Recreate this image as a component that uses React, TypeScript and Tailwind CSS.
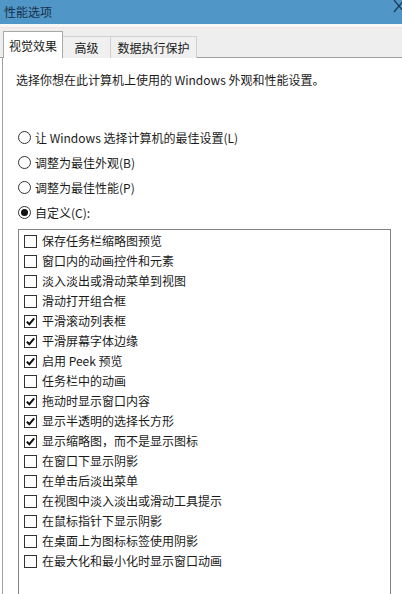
import React from "react";

const items: [string, boolean][] = [
  ["保存任务栏缩略图预览", false],
  ["窗口内的动画控件和元素", false],
  ["淡入淡出或滑动菜单到视图", false],
  ["滑动打开组合框", false],
  ["平滑滚动列表框", true],
  ["平滑屏幕字体边缘", true],
  ["启用 Peek 预览", true],
  ["任务栏中的动画", false],
  ["拖动时显示窗口内容", true],
  ["显示半透明的选择长方形", true],
  ["显示缩略图，而不是显示图标", true],
  ["在窗口下显示阴影", false],
  ["在单击后淡出菜单", false],
  ["在视图中淡入淡出或滑动工具提示", false],
  ["在鼠标指针下显示阴影", false],
  ["在桌面上为图标标签使用阴影", false],
  ["在最大化和最小化时显示窗口动画", false],
];

const radios: [string, boolean][] = [
  ["让 Windows 选择计算机的最佳设置(L)", false],
  ["调整为最佳外观(B)", false],
  ["调整为最佳性能(P)", false],
  ["自定义(C):", true],
];

function Radio({ on }: { on: boolean }) {
  return (
    <div className="w-[13px] h-[13px] rounded-full border border-[#333333] bg-white flex items-center justify-center shrink-0">
      {on && <div className="w-[7px] h-[7px] rounded-full bg-[#111111]" />}
    </div>
  );
}

function Check({ on }: { on: boolean }) {
  return (
    <div className="w-[13px] h-[13px] border border-[#333333] bg-white flex items-center justify-center shrink-0">
      {on && (
        <svg width="11" height="11" viewBox="0 0 11 11">
          <path d="M1.8 5.6 L4.3 8.2 L9.2 2.4" fill="none" stroke="#111111" strokeWidth="2" />
        </svg>
      )}
    </div>
  );
}

export default function App() {
  return (
    <div
      className="w-[402px] h-[594px] overflow-hidden bg-white flex flex-col text-[12px] leading-[16px] text-[#1a1a1a]"
      style={{ fontFamily: '"Noto Sans CJK SC", "Noto Sans", sans-serif' }}
    >
      {/* title bar */}
      <div className="h-[24px] bg-[#5096c6] flex items-start justify-between pl-[4px] shrink-0 overflow-hidden">
        <span className="text-[#16304a] text-[12px] mt-[4px]">性能选项</span>
        <svg width="10" height="14" viewBox="0 0 10 14" className="shrink-0">
          <path d="M2 0 L12 12 M12 0 L2 12" stroke="#1c3550" strokeWidth="1.2" fill="none" />
        </svg>
      </div>
      <div className="h-[4px] bg-[#f7f7f7] border-b border-[#f2e4e0] shrink-0" />
      {/* tab strip */}
      <div className="h-[30px] bg-[#eeeeee] flex items-end shrink-0 relative">
        <div className="absolute left-0 right-0 bottom-0 h-px bg-[#a0a0a0]" />
        <div className="w-[3px]" />
        <div className="relative z-10 h-[27px] w-[60px] bg-white border border-b-0 border-[#a8a8a8] flex items-center justify-center pt-[2px]">
          视觉效果
        </div>
        <div className="relative h-[22px] w-[48px] bg-[#f0f0f0] border border-l-0 border-b-0 border-[#d0d0d0] flex items-center justify-center">
          高级
        </div>
        <div className="relative h-[22px] w-[86px] bg-[#f0f0f0] border border-l-0 border-b-0 border-[#d0d0d0] flex items-center justify-center">
          数据执行保护
        </div>
      </div>
      {/* panel */}
      <div className="flex-1 ml-[2px] border-l border-[#a0a0a0] bg-white flex flex-col">
        <div className="mt-[14px] pl-[13px]">选择你想在此计算机上使用的 Windows 外观和性能设置。</div>
        <div className="mt-[37px] flex flex-col pl-[15px]">
          {radios.map(([label, on]) => (
            <div key={label} className="h-[25px] flex items-center gap-[4px]">
              <Radio on={on} />
              <span>{label}</span>
            </div>
          ))}
        </div>
        <div className="mt-[4px] ml-[15px] w-[373px] flex-1 border border-[#828282] border-b-0 flex flex-col pt-[1px]">
          {items.map(([label, on]) => (
            <div key={label} className="h-[20px] flex items-center pl-[5px] gap-[5px]">
              <Check on={on} />
              <span>{label}</span>
            </div>
          ))}
        </div>
      </div>
    </div>
  );
}
